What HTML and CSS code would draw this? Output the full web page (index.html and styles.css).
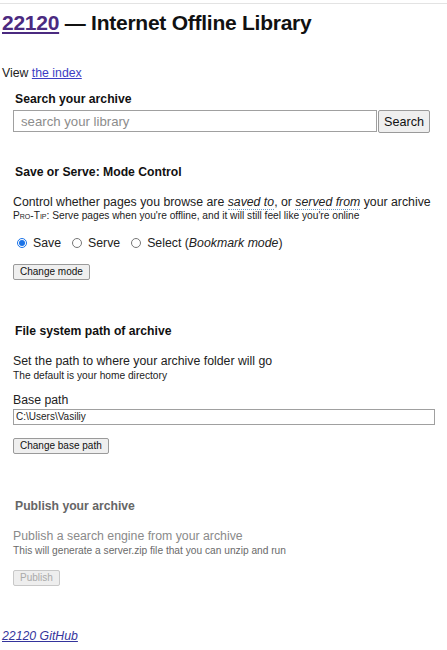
FILE: index.html
```html
<!DOCTYPE html>
<html>
<head>
<meta charset="utf-8">
<title>22120</title>
<link rel="stylesheet" href="styles.css">
</head>
<body>
<div class="topline"></div>
<h1 class="title"><a class="home" href="#">22120</a> — Internet Offline Library</h1>
<p class="view">View <a class="index" href="#">the index</a></p>

<section class="card search-card">
  <h2 class="heading">Search your archive</h2>
  <div class="search-row">
    <input class="search-input" type="text" placeholder="search your library">
    <button class="btn search-btn">Search</button>
  </div>
</section>

<section class="card mode-card">
  <h2 class="heading">Save or Serve: Mode Control</h2>
  <p class="lead">Control whether pages you browse are <em class="dotted">saved to</em>, or <em class="dotted">served from</em> your archive</p>
  <p class="small"><span class="sc">Pro-Tip:</span> Serve pages when you're offline, and it will still feel like you're online</p>
  <div class="radios">
    <label class="radio"><input type="radio" name="mode" checked>Save</label>
    <label class="radio"><input type="radio" name="mode">Serve</label>
    <label class="radio"><input type="radio" name="mode">Select (<em>Bookmark mode</em>)</label>
  </div>
  <button class="btn">Change mode</button>
</section>

<section class="card path-card">
  <h2 class="heading">File system path of archive</h2>
  <p class="lead">Set the path to where your archive folder will go</p>
  <p class="small">The default is your home directory</p>
  <label class="field-label">Base path</label>
  <input class="path-input" type="text" value="C:\Users\Vasiliy">
  <button class="btn">Change base path</button>
</section>

<section class="card publish-card disabled">
  <h2 class="heading">Publish your archive</h2>
  <p class="lead">Publish a search engine from your archive</p>
  <p class="small">This will generate a server.zip file that you can unzip and run</p>
  <button class="btn" disabled>Publish</button>
</section>

<p class="footer"><a class="gh" href="#">22120 GitHub</a></p>
</body>
</html>
```

FILE: styles.css
```css
html { background: #fff; }
body {
  margin: 0;
  padding: 3px 2px 0;
  font-family: "Liberation Sans", Arial, sans-serif;
  color: #222;
  font-size: 12.3px;
  line-height: 15px;
}
.topline {
  height: 1px;
  background: #e3e3e3;
  margin: 0 -2px;
}
.title {
  font-size: 21px;
  letter-spacing: -0.25px;
  line-height: 24px;
  font-weight: bold;
  margin: 7px 0 0;
  color: #111;
}
.home { color: #4b2a80; }
.view {
  margin: 31px 0 0;
}
.index { color: #3d3dc4; }
.card {
  padding: 0 10px 0 11px;
}
.heading {
  font-size: 12.2px;
  line-height: 15px;
  font-weight: bold;
  margin: 0 0 0 2px;
  color: #111;
}
.search-card { margin-top: 11px; }
.search-card .heading { margin-bottom: 3px; }
.search-row { display: flex; margin-right: 5px; }
.search-input {
  flex: 1;
  min-width: 0;
  height: 22px;
  box-sizing: border-box;
  border: 1px solid #a0a0a0;
  padding: 0 7px;
  font: 13.2px "Liberation Sans", Arial, sans-serif;
  border-radius: 0;
  margin: 0;
}
.search-input::placeholder { color: #8c8c8c; }
.btn {
  display: block;
  box-sizing: border-box;
  height: 16px;
  font: 10px/12px "Liberation Sans", Arial, sans-serif;
  color: #111;
  background: #efefef;
  border: 1px solid #9a9a9a;
  border-radius: 2px;
  padding: 0 6px;
  margin: 0;
}
.search-btn {
  height: 23px;
  margin-left: 1px;
  padding: 0 5px;
  font-size: 12.6px;
  line-height: 20px;
}
.mode-card { margin-top: 32px; }
.lead {
  margin: 15px 0 0;
  white-space: nowrap;
}
.small {
  font-size: 10.2px;
  line-height: 12px;
  margin: 0;
}
.sc { font-variant: small-caps; }
.dotted { border-bottom: 1px dotted #6f9dc9; }
.radios {
  margin: 12.5px 0 13px;
  line-height: 16px;
  display: flex;
  align-items: center;
}
.radio { display: inline-flex; align-items: center; margin-right: 7px; }
.radio input {
  margin: 0 6px 0 4px;
  width: 10px;
  height: 10px;
  accent-color: #1a73e8;
}
.path-card { margin-top: 44px; }
.field-label {
  display: block;
  margin-top: 11px;
}
.path-input {
  display: block;
  width: 100%;
  box-sizing: border-box;
  height: 16px;
  border: 1px solid #a0a0a0;
  font: 10px "Liberation Sans", Arial, sans-serif;
  padding: 0 2px;
  margin: 1px 0 13px;
  color: #222;
}
.path-card .small { margin-top: 1px; }
.publish-card { margin-top: 45px; }
.publish-card .small { margin-top: 1px; margin-bottom: 13.5px; }
.disabled .heading { color: #666; }
.disabled .lead { color: #8a8a8a; }
.disabled .small { color: #6a6a6a; }
.btn:disabled { color: #aaa; border-color: #c8c8c8; background: #eeeeee; }
.footer {
  margin: 43px 0 0;
}
.gh { color: #34349c; font-style: italic; }
```
